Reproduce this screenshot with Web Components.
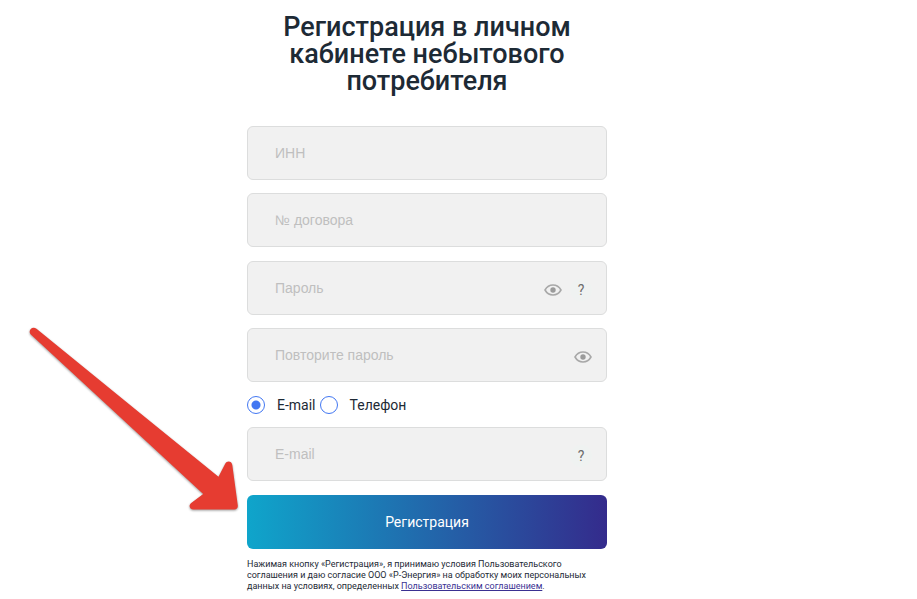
<!DOCTYPE html>
<html lang="ru">
<head>
<meta charset="utf-8">
<meta name="viewport" content="width=device-width, initial-scale=1">
<title>Регистрация</title>
<style>
    body {
        margin: 0;
        background: #fff;
        color: #1d2a35;
        font-family: Roboto, "Liberation Sans", sans-serif;
    }
</style>
</head>
<body>
<registration-page>
    <registration-form></registration-form>
    <pointer-arrow slot="overlay"></pointer-arrow>
</registration-page>

<script>
// Page shell
class RegistrationPage extends HTMLElement {
    constructor() {
        super();
        this.attachShadow({ mode: 'open' });
        this.shadowRoot.innerHTML = `
            <style>
                :host {
                    display: block;
                    position: relative;
                }
                main {
                    display: flex;
                    justify-content: center;
                    padding: 14px 63px 0 0;
                }
            </style>
            <main><slot></slot></main>
            <slot name="overlay"></slot>
        `;
    }
}

// Text box with room for small buttons at its right edge
class FormField extends HTMLElement {
    constructor() {
        super();
        this.attachShadow({ mode: 'open' });
    }

    connectedCallback() {
        const label = this.getAttribute('label') || '';
        const type = this.getAttribute('type') || 'text';

        this.shadowRoot.innerHTML = `
            <style>
                :host {
                    display: grid;
                    align-items: center;
                }
                input {
                    grid-area: 1 / 1;
                    box-sizing: border-box;
                    width: 100%;
                    height: 54px;
                    padding: 0 27px;
                    border: 1px solid #dcdddd;
                    border-radius: 6px;
                    outline: none;
                    background: #f1f1f1;
                    color: #1d2a35;
                    font: 14px "Liberation Sans", Arial, sans-serif;
                }
                input::placeholder {
                    color: #bfbfbf;
                    opacity: 1;
                }
                input:focus {
                    border-color: #4277f2;
                }
                .actions {
                    grid-area: 1 / 1;
                    justify-self: end;
                    display: flex;
                    align-items: center;
                    gap: 8px;
                    padding: 3px 15px 0 0;
                }
            </style>
            <input type="${type}" placeholder="${label}" aria-label="${label}">
            <div class="actions"><slot></slot></div>
        `;

        this.addEventListener('toggle-visibility', () => {
            const input = this.shadowRoot.querySelector('input');
            input.type = input.type === 'password' ? 'text' : 'password';
        });
    }
}

class EyeToggle extends HTMLElement {
    constructor() {
        super();
        this.attachShadow({ mode: 'open' });
        this.shadowRoot.innerHTML = `
            <style>
                :host {
                    display: block;
                }
                button {
                    display: block;
                    padding: 0;
                    border: 0;
                    background: none;
                    cursor: pointer;
                }
                svg {
                    display: block;
                }
            </style>
            <button type="button" aria-label="Показать пароль">
                <svg width="18" height="14" viewBox="0 0 18 14" fill="none">
                    <path d="M1 7C2.8 3.8 5.6 2 9 2S15.2 3.8 17 7C15.2 10.2 12.4 12 9 12S2.8 10.2 1 7Z" stroke="#a8a8a8" stroke-width="1.6" stroke-linejoin="round"/>
                    <circle cx="9" cy="7" r="2.7" fill="#9b9b9b"/>
                </svg>
            </button>
        `;
        this.shadowRoot.querySelector('button').addEventListener('click', () => {
            this.dispatchEvent(new CustomEvent('toggle-visibility', { bubbles: true }));
        });
    }
}

class HelpHint extends HTMLElement {
    constructor() {
        super();
        this.attachShadow({ mode: 'open' });
        this.shadowRoot.innerHTML = `
            <style>
                :host {
                    display: block;
                }
                button {
                    display: block;
                    width: 22px;
                    height: 22px;
                    padding: 0;
                    border: 0;
                    border-radius: 50%;
                    background: #eff2f1;
                    color: #6c6c6c;
                    font: 14px/22px Roboto, sans-serif;
                    text-align: center;
                    cursor: pointer;
                }
            </style>
            <button type="button">?</button>
        `;
    }
}

// Both radios share one root so the browser groups them by name
class ContactChoice extends HTMLElement {
    constructor() {
        super();
        this.attachShadow({ mode: 'open' });
        this.shadowRoot.innerHTML = `
            <style>
                :host {
                    display: flex;
                    gap: 4px;
                    font-size: 14px;
                    line-height: 18px;
                }
                label {
                    display: flex;
                    align-items: center;
                    gap: 12px;
                }
                input {
                    appearance: none;
                    box-sizing: border-box;
                    width: 18px;
                    height: 18px;
                    margin: 0;
                    border: 1px solid #4277f2;
                    border-radius: 50%;
                    background: #fff;
                }
                input:checked {
                    background: radial-gradient(circle, #4277f2 4px, #fff 5px);
                }
            </style>
            <label><input type="radio" name="contact" value="email" checked>E-mail</label>
            <label><input type="radio" name="contact" value="phone">Телефон</label>
        `;
    }
}

class SubmitButton extends HTMLElement {
    constructor() {
        super();
        this.attachShadow({ mode: 'open' });
        this.shadowRoot.innerHTML = `
            <style>
                :host {
                    display: block;
                }
                button {
                    display: block;
                    width: 100%;
                    height: 54px;
                    padding: 0;
                    border: 0;
                    border-radius: 6px;
                    background: linear-gradient(90deg, #0fa5cb, #342b8c);
                    color: #fff;
                    font: 14px Roboto, sans-serif;
                    cursor: pointer;
                }
            </style>
            <button type="button"><slot></slot></button>
        `;
    }
}

class RegistrationForm extends HTMLElement {
    constructor() {
        super();
        this.attachShadow({ mode: 'open' });
        this.shadowRoot.innerHTML = `
            <style>
                :host {
                    display: block;
                    width: 100%;
                    max-width: 360px;
                }
                h1 {
                    margin: 0 0 31px;
                    padding: 0 30px;
                    font-size: 27px;
                    font-weight: 500;
                    line-height: 27px;
                    text-align: center;
                }
                form {
                    display: grid;
                    gap: 14px;
                }
                .group {
                    display: grid;
                    gap: 13px;
                }
                p {
                    margin: 10px 0 0;
                    font-size: 9px;
                    line-height: 11px;
                }
                a {
                    color: #3a3192;
                    text-underline-offset: 1px;
                }
            </style>
            <h1>Регистрация в личном кабинете небытового потребителя</h1>
            <form>
                <div class="group">
                    <form-field label="ИНН"></form-field>
                    <form-field label="№ договора"></form-field>
                </div>
                <div class="group">
                    <form-field label="Пароль" type="password">
                        <eye-toggle></eye-toggle>
                        <help-hint></help-hint>
                    </form-field>
                    <form-field label="Повторите пароль" type="password">
                        <eye-toggle></eye-toggle>
                    </form-field>
                </div>
                <div class="group">
                    <contact-choice></contact-choice>
                    <form-field label="E-mail" type="email">
                        <help-hint></help-hint>
                    </form-field>
                </div>
                <submit-button>Регистрация</submit-button>
            </form>
            <p>Нажимая кнопку «Регистрация», я принимаю условия Пользовательского соглашения и даю согласие ООО «Р-Энергия» на обработку моих персональных данных на условиях, определенных <a href="#">Пользовательским соглашением</a>.</p>
        `;
    }
}

// Red arrow laid over the page, pointing at the submit button
class PointerArrow extends HTMLElement {
    constructor() {
        super();
        this.attachShadow({ mode: 'open' });
        this.shadowRoot.innerHTML = `
            <style>
                :host {
                    position: absolute;
                    top: 320px;
                    left: 20px;
                    pointer-events: none;
                }
                svg {
                    display: block;
                    filter: drop-shadow(0 1px 1px rgba(0, 0, 0, 0.4));
                }
            </style>
            <svg width="225" height="200" viewBox="20 320 225 200" aria-hidden="true">
                <path fill="#e63c31" d="M36.5 328.8L135 409L218.5 476.8L225.2 463.8C227 460.4 231.7 461 232.3 465L237.8 505.5C238 508 236.5 509.5 234.5 509.5H193.5C189.5 509.5 188.3 505.2 191.2 503L203.2 494L30.8 334.6C27.5 330.8 32 325.5 36.5 328.8Z"/>
            </svg>
        `;
    }
}

customElements.define('registration-page', RegistrationPage);
customElements.define('form-field', FormField);
customElements.define('eye-toggle', EyeToggle);
customElements.define('help-hint', HelpHint);
customElements.define('contact-choice', ContactChoice);
customElements.define('submit-button', SubmitButton);
customElements.define('registration-form', RegistrationForm);
customElements.define('pointer-arrow', PointerArrow);
</script>
</body>
</html>
